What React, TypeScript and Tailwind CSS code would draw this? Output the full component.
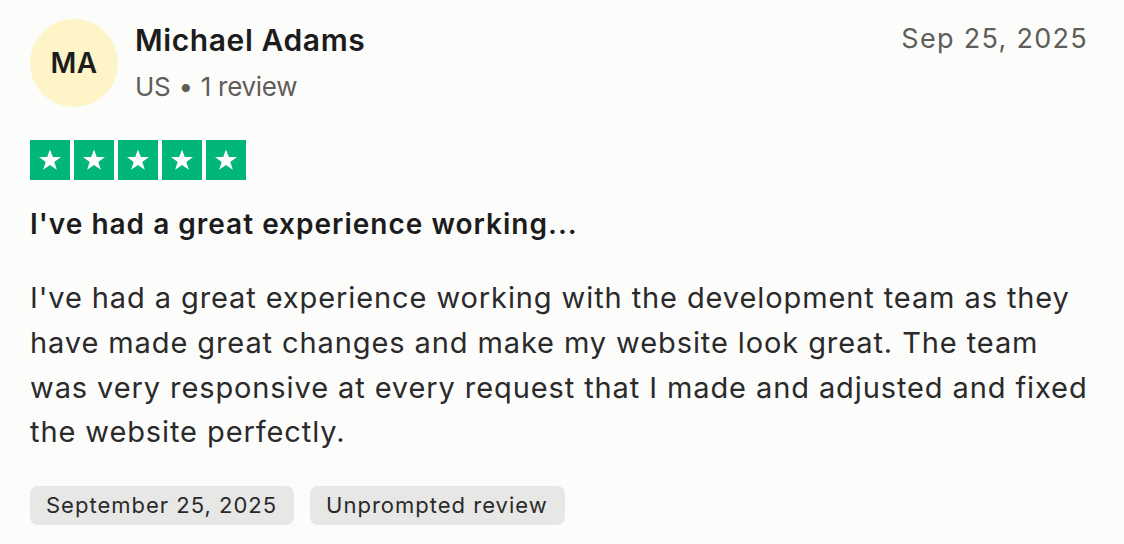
import React from 'react';

const Star: React.FC = () => (
  <div className="flex h-10 w-10 items-center justify-center bg-[#00b67a]">
    <svg viewBox="0 0 24 24" className="h-[26px] w-[26px]" fill="#ffffff">
      <path d="M12 2.2l2.6 7.1h7.5l-6.1 4.5 2.3 7.3L12 16.6l-6.3 4.5 2.3-7.3-6.1-4.5h7.5z" />
    </svg>
  </div>
);

const App: React.FC = () => {
  return (
    <div
      className="min-h-[544px] w-[1124px] bg-[#fcfcfb] pl-[30px] pr-[30px] pt-[19px] text-[#1c1c1c]"
      style={{ fontFamily: 'Inter, "Noto Sans", sans-serif' }}
    >
      {/* Header */}
      <div className="flex items-start justify-between">
        <div className="flex items-start">
          <div className="flex h-[88px] w-[88px] items-center justify-center rounded-full bg-[#fdf5c7] text-[28px] font-semibold tracking-[0.5px] text-[#1c1c1c]">
            MA
          </div>
          <div className="ml-[17px] pt-[1px]">
            <div className="text-[30px] font-semibold leading-[40px] tracking-[0.6px]">Michael Adams</div>
            <div className="mt-[9px] text-[26px] leading-[36px] tracking-[-0.3px] text-[#5f5d59]">
              US <span className="mx-[1px]">•</span> 1 review
            </div>
          </div>
        </div>
        <div className="pr-[6px] pt-[1px] text-[27px] leading-[38px] tracking-[1.3px] text-[#5f5d59]">Sep 25, 2025</div>
      </div>

      {/* Rating */}
      <div className="mt-[33px] flex gap-[4px]">
        <Star />
        <Star />
        <Star />
        <Star />
        <Star />
      </div>

      {/* Title */}
      <h2 className="mt-[24px] text-[28px] font-semibold leading-[40px] tracking-[1px]">
        I've had a great experience working...
      </h2>

      {/* Body */}
      <p className="mt-[32px] whitespace-nowrap text-[29px] leading-[44.8px] tracking-[0.9px] text-[#2a2a2a]">
        I've had a great experience working with the development team as they
        <br />
        have made great changes and make my website look great. The team
        <br />
        was very responsive at every request that I made and adjusted and fixed
        <br />
        the website perfectly.
      </p>

      {/* Tags */}
      <div className="mt-[31px] flex gap-4">
        <span className="rounded-[8px] bg-[#e7e7e5] pl-4 pr-[17px] text-[22px] leading-[39px] tracking-[1px] text-[#2a2a2a]">
          September 25, 2025
        </span>
        <span className="rounded-[8px] bg-[#e7e7e5] pl-4 pr-[17px] text-[22px] leading-[39px] tracking-[1px] text-[#2a2a2a]">
          Unprompted review
        </span>
      </div>
    </div>
  );
};

export default App;
